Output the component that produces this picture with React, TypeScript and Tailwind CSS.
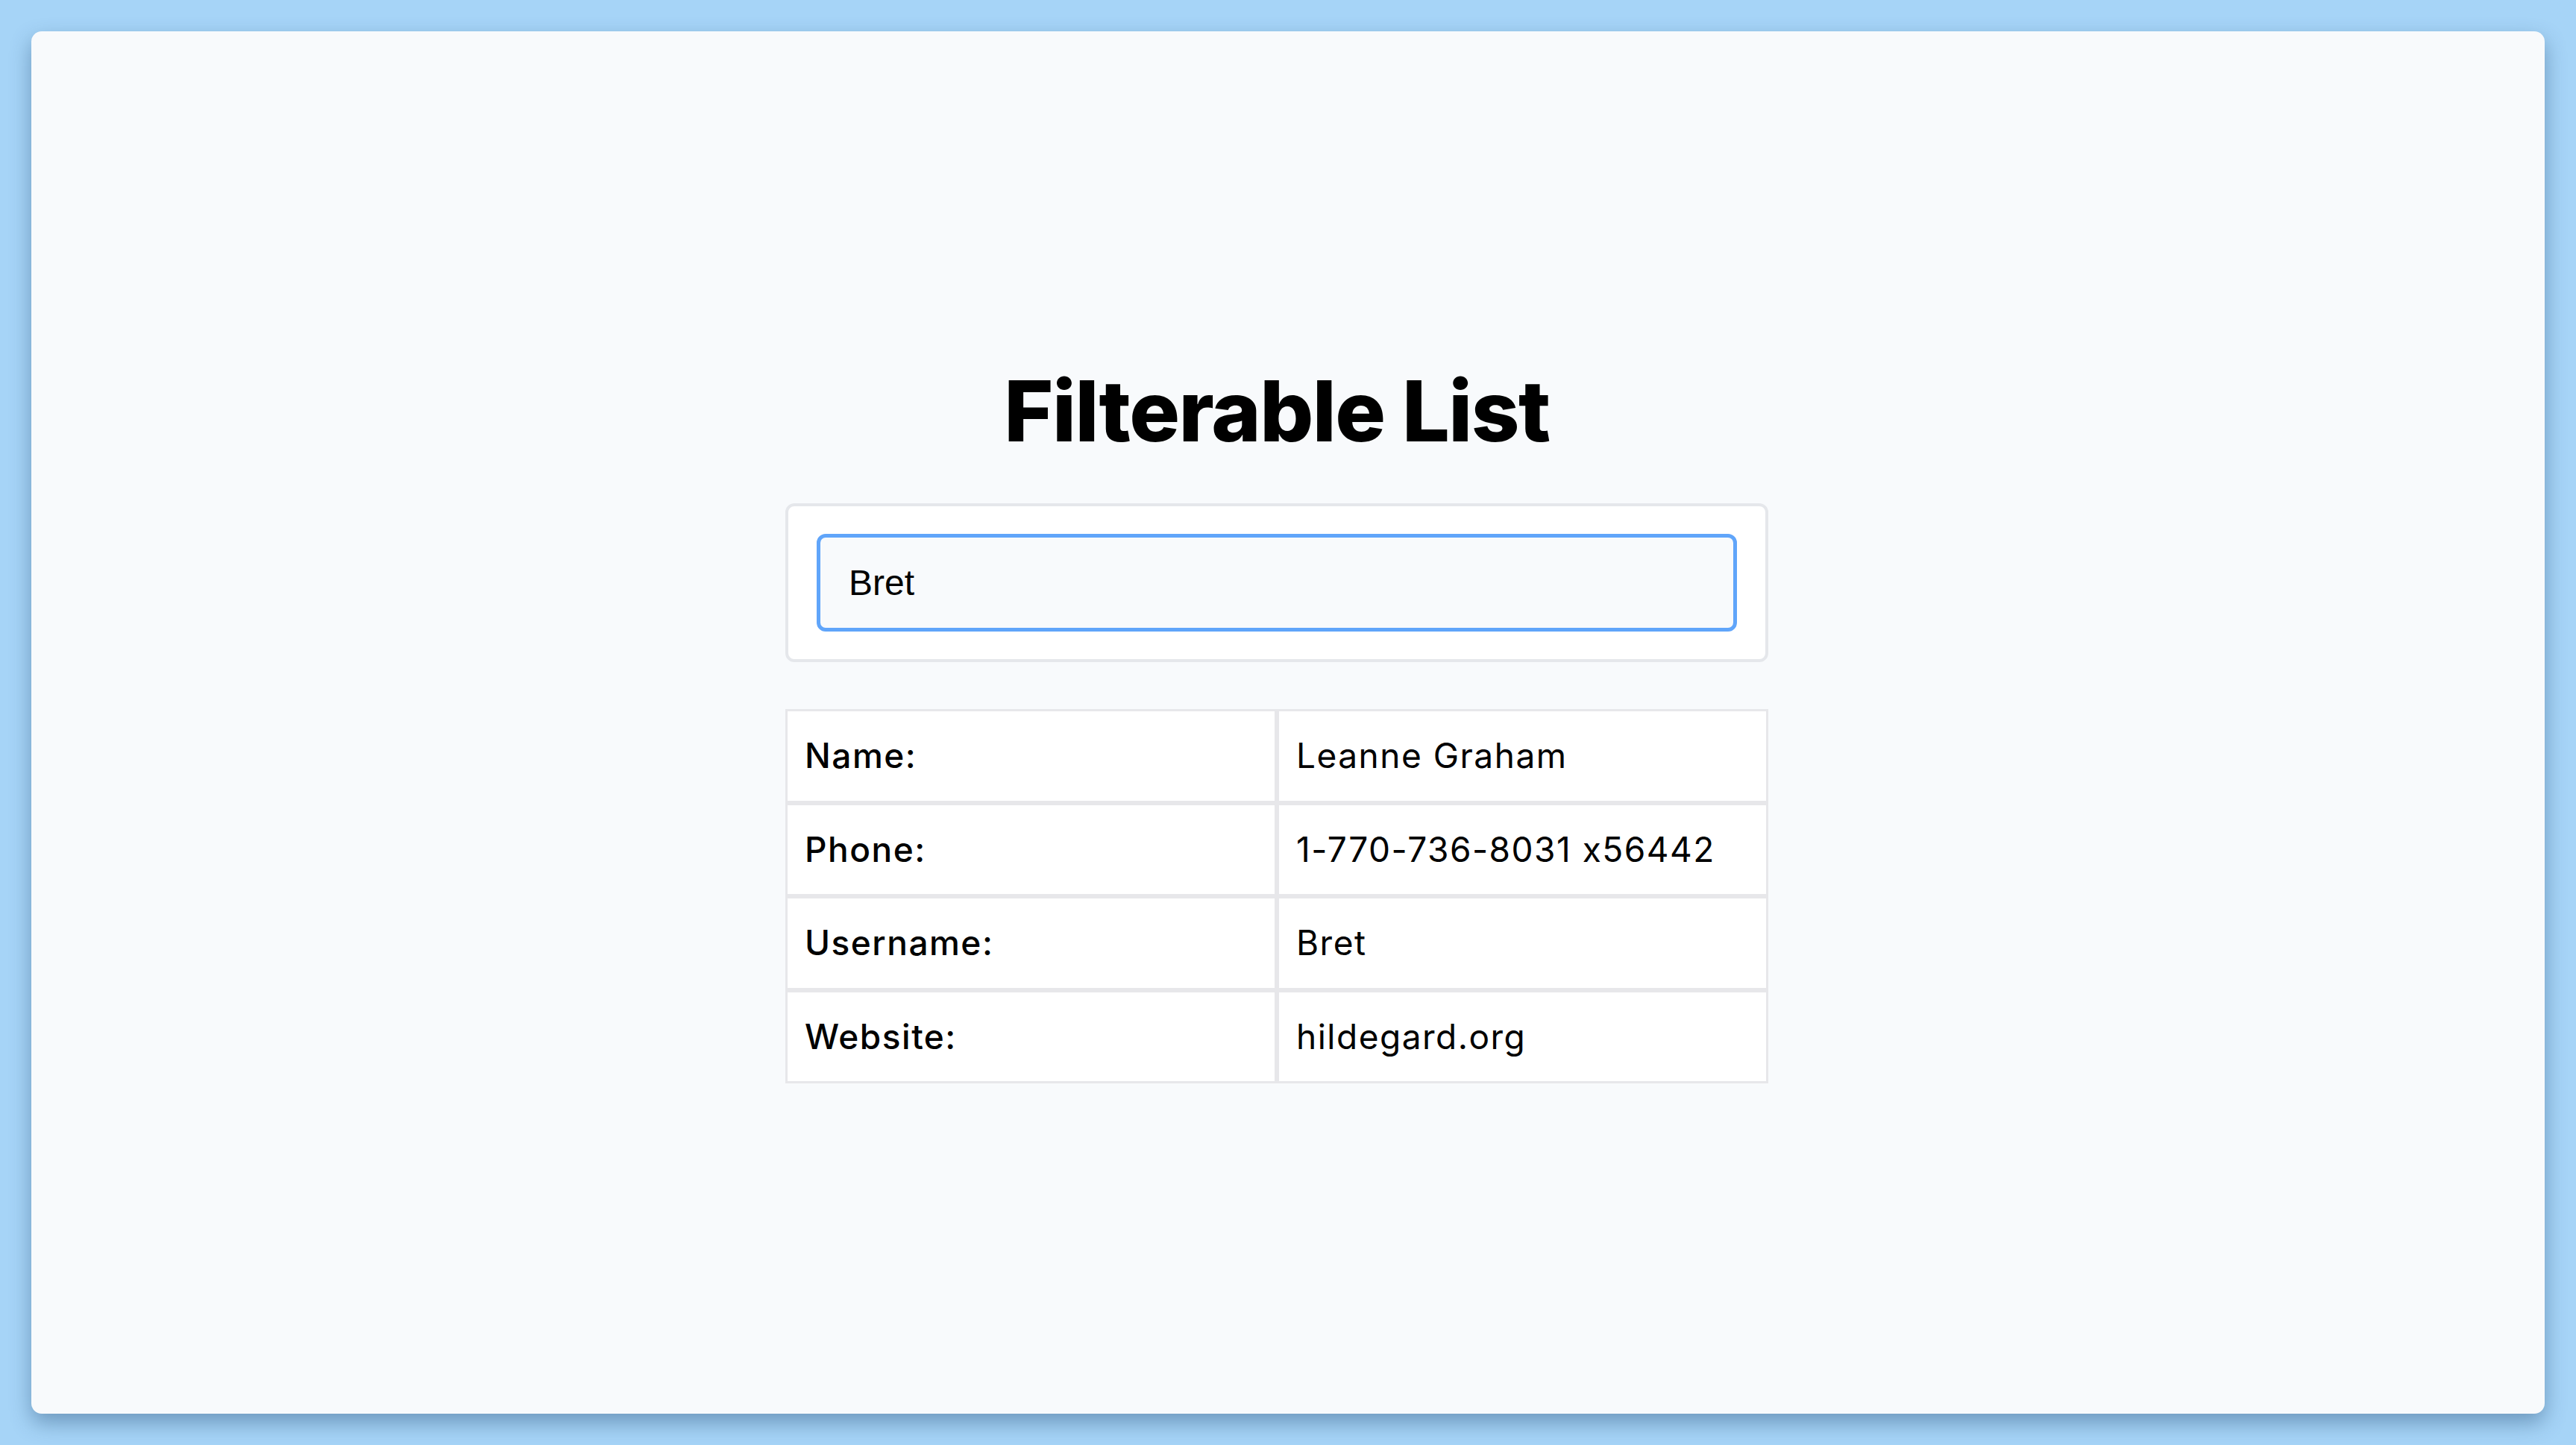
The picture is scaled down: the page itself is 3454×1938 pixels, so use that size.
import React, { useState } from "react";

const users = [
  { label: "Name:", value: "Leanne Graham" },
  { label: "Phone:", value: "1-770-736-8031 x56442" },
  { label: "Username:", value: "Bret" },
  { label: "Website:", value: "hildegard.org" },
];

const App = () => {
  const [query, setQuery] = useState("Bret");

  return (
    <div className="w-screen h-screen bg-[#a6d4f7] p-[42px]">
      <div
        className="h-full w-full rounded-[14px] bg-[#f8fafc] shadow-[0_12px_28px_rgba(40,80,120,0.45)] flex flex-col items-center justify-center pr-[30px] pt-[6px] [font-feature-settings:'calt'_0]"
        style={{ fontFamily: "Inter, 'Open Sans', sans-serif" }}
      >
        <div className="w-[1318px] flex flex-col items-center">
          <h1 className="text-[113px] leading-none font-extrabold text-black tracking-[-1.5px] mb-[67px] mt-[4px]">
            Filterable List
          </h1>

          <div className="w-full bg-white border-[4px] border-[#e5e7eb] rounded-[12px] px-[38px] py-[37px]">
            <input
              autoFocus
              value={query}
              onChange={(e) => setQuery(e.target.value)}
              className="w-full h-[131px] bg-[#f8fafc] border-[5px] border-[#60a5fa] rounded-[12px] px-[38px] text-[48px] text-black outline-none caret-black"
              style={{ fontFamily: "'Liberation Sans', Arial, sans-serif" }}
            />
          </div>

          <div className="w-full grid grid-cols-2 mt-[63px]">
            {users.map((row) => (
              <React.Fragment key={row.label}>
                <div className="h-[125.5px] bg-white border-[3px] border-[#e7e7ea] flex items-center px-[23px] text-[46px] tracking-[1.5px] font-medium text-black">
                  {row.label}
                </div>
                <div className="h-[125.5px] bg-white border-[3px] border-[#e7e7ea] flex items-center px-[23px] text-[46px] tracking-[1.5px] text-black">
                  {row.value}
                </div>
              </React.Fragment>
            ))}
          </div>
        </div>
      </div>
    </div>
  );
};

export default App;
